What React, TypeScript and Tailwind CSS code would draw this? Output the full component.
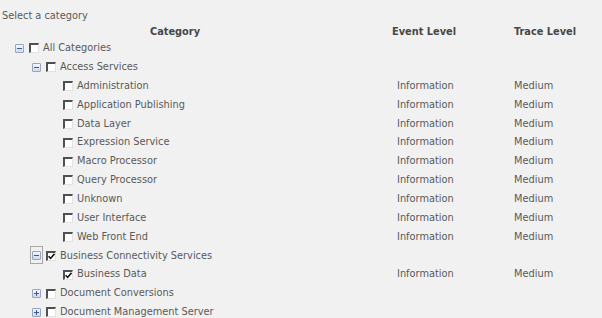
import React from 'react';

type Row = {
  label: string;
  level: 0 | 1 | 2;
  expander?: 'minus' | 'plus';
  checked?: boolean;
  focused?: boolean;
  event?: string;
  trace?: string;
};

const rows: Row[] = [
  { label: 'All Categories', level: 0, expander: 'minus' },
  { label: 'Access Services', level: 1, expander: 'minus' },
  { label: 'Administration', level: 2, event: 'Information', trace: 'Medium' },
  { label: 'Application Publishing', level: 2, event: 'Information', trace: 'Medium' },
  { label: 'Data Layer', level: 2, event: 'Information', trace: 'Medium' },
  { label: 'Expression Service', level: 2, event: 'Information', trace: 'Medium' },
  { label: 'Macro Processor', level: 2, event: 'Information', trace: 'Medium' },
  { label: 'Query Processor', level: 2, event: 'Information', trace: 'Medium' },
  { label: 'Unknown', level: 2, event: 'Information', trace: 'Medium' },
  { label: 'User Interface', level: 2, event: 'Information', trace: 'Medium' },
  { label: 'Web Front End', level: 2, event: 'Information', trace: 'Medium' },
  { label: 'Business Connectivity Services', level: 1, expander: 'minus', checked: true, focused: true },
  { label: 'Business Data', level: 2, checked: true, event: 'Information', trace: 'Medium' },
  { label: 'Document Conversions', level: 1, expander: 'plus' },
  { label: 'Document Management Server', level: 1, expander: 'plus' },
];

const indent = { 0: 'pl-[15px]', 1: 'pl-[32px]', 2: 'pl-[49px]' };

function Expander({ kind, focused }: { kind: 'minus' | 'plus'; focused?: boolean }) {
  const box = (
    <span className="relative flex h-[9px] w-[9px] items-center justify-center rounded-[1px] border border-[#97a5bd] bg-gradient-to-b from-[#f4f7fc] to-[#cfd9ec]">
      <span className="h-[1px] w-[5px] bg-[#3a5a92]" />
      {kind === 'plus' && <span className="absolute h-[5px] w-[1px] bg-[#3a5a92]" />}
    </span>
  );
  if (focused) {
    return (
      <span className="relative mr-[5px] flex h-[9px] w-[9px] items-center justify-center">
        <span className="absolute left-[-2px] top-[-5px] h-[18px] w-[13px] border border-[#a8a8a8]" />
        {box}
      </span>
    );
  }
  return <span className="mr-[5px] flex">{box}</span>;
}

function Checkbox({ checked }: { checked?: boolean }) {
  return (
    <span className="mr-[4px] flex h-[10px] w-[10px] items-center justify-center border-b border-l-2 border-r border-t-2 border-b-[#e2e2e2] border-l-[#505050] border-r-[#e2e2e2] border-t-[#505050] bg-white">
      {checked && (
        <svg width="7" height="7" viewBox="0 0 7 7">
          <path d="M0.5 3.2 L2.6 5.4 L6.5 0.8" fill="none" stroke="#111" strokeWidth="1.6" />
        </svg>
      )}
    </span>
  );
}

export default function App() {
  return (
    <div
      className="h-[318px] w-[602px] overflow-hidden bg-[#f1f1f1] text-[9.8px] text-[#595959]"
      style={{ fontFamily: '"DejaVu Sans", Verdana, sans-serif' }}
    >
      <div className="h-[23px] pl-[2px] pt-[10px] leading-[12px]">Select a category</div>
      <div className="grid h-[16px] grid-cols-[350px_148px_94px] pt-[2px] font-bold leading-[14px] text-[#474747]">
        <div className="text-center">Category</div>
        <div className="text-center">Event Level</div>
        <div className="text-center">Trace Level</div>
      </div>
      {rows.map((r) => (
        <div key={r.label} className="grid h-[18.86px] grid-cols-[350px_148px_94px] items-center">
          <div className={`flex items-center ${indent[r.level]}`}>
            {r.expander ? <Expander kind={r.expander} focused={r.focused} /> : <span className="w-[14px]" />}
            <Checkbox checked={r.checked} />
            <span className="whitespace-nowrap">{r.label}</span>
          </div>
          <div className="pl-[47px]">{r.event}</div>
          <div className="pl-[16px]">{r.trace}</div>
        </div>
      ))}
    </div>
  );
}
